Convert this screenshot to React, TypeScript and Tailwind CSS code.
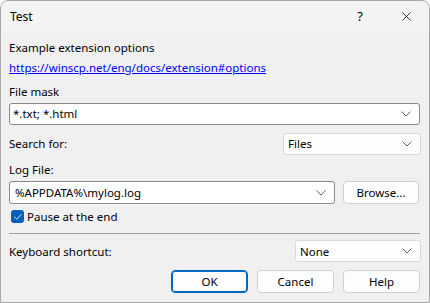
import { X, Check } from 'lucide-react';

function Chevron() {
  return (
    <svg width="10" height="6" viewBox="0 0 10 6" className="text-[#5f5f5f]">
      <path d="M0.5 0.5 L5 5 L9.5 0.5" fill="none" stroke="currentColor" strokeWidth="1" />
    </svg>
  );
}

function Combo({ value, className, editable }: { value: string; className: string; editable?: boolean }) {
  return (
    <div
      className={`flex h-[22px] items-center justify-between rounded-[3px] border pl-[3px] pr-[8px] ${
        editable ? 'border-[#8a8a8a] bg-white' : 'border-[#d9d9d9] bg-[#fdfdfd]'
      } ${className}`}
    >
      <span className="leading-none">{value}</span>
      <Chevron />
    </div>
  );
}

function Btn({ label, primary, className }: { label: string; primary?: boolean; className: string }) {
  return (
    <button
      className={`flex h-[23px] items-center justify-center rounded-[4px] border bg-[#fdfdfd] ${
        primary ? 'border-[#0067c0] shadow-[inset_0_0_0_1px_#0067c0]' : 'border-[#d0d0d0]'
      } ${className}`}
    >
      {label}
    </button>
  );
}

export default function App() {
  return (
    <div
      className="h-[303px] w-[430px] overflow-hidden rounded-t-[8px] border border-[#a9a9a9] bg-[#f0f0f0] text-[11.5px] text-black"
      style={{ fontFamily: '"Noto Sans", "Segoe UI", sans-serif' }}
    >
      <div className="flex h-[31px] items-center bg-[#f3f3f3]">
        <span className="ml-[9px] flex-1 text-[12px]">Test</span>
        <span className="w-[46px] text-center text-[13px]">?</span>
        <span className="flex w-[46px] items-center justify-center">
          <X size={15} strokeWidth={1.2} />
        </span>
      </div>

      <div className="flex flex-col px-[8px]">
        <div className="mt-[7px] h-[17px] leading-[17px]">Example extension options</div>
        <div className="mt-[3px] h-[17px] leading-[17px] text-[#0000ff] underline">
          https://winscp.net/eng/docs/extension#options
        </div>
        <div className="mt-[7px] h-[17px] leading-[17px]">File mask</div>
        <Combo value="*.txt; *.html" editable className="mt-[3px] w-[411px]" />

        <div className="mt-[8px] flex items-center justify-between">
          <span>Search for:</span>
          <Combo value="Files" className="w-[138px] pl-[4px]" />
        </div>

        <div className="mt-[6px] h-[17px] leading-[17px]">Log File:</div>
        <div className="mt-[3px] flex items-center gap-[8px]">
          <Combo value="%APPDATA%\mylog.log" editable className="h-[23px] w-[326px] pl-[5px]" />
          <Btn label="Browse..." className="w-[76px]" />
        </div>

        <div className="mt-[4px] flex items-center gap-[3px] pl-[2px]">
          <span className="flex h-[13px] w-[13px] items-center justify-center rounded-[3px] bg-[#005fb8]">
            <Check size={10} strokeWidth={2} className="text-white" />
          </span>
          <span>Pause at the end</span>
        </div>

        <div className="mt-[8px] h-px w-[411px] bg-[#a0a0a0]" />

        <div className="mt-[6px] flex items-center justify-between">
          <span>Keyboard shortcut:</span>
          <Combo value="None" className="w-[126px] pl-[4px]" />
        </div>

        <div className="mt-[8px] flex justify-end gap-[9px] pr-[1px]">
          <Btn label="OK" primary className="w-[77px]" />
          <Btn label="Cancel" className="w-[77px]" />
          <Btn label="Help" className="w-[77px]" />
        </div>
      </div>
    </div>
  );
}
